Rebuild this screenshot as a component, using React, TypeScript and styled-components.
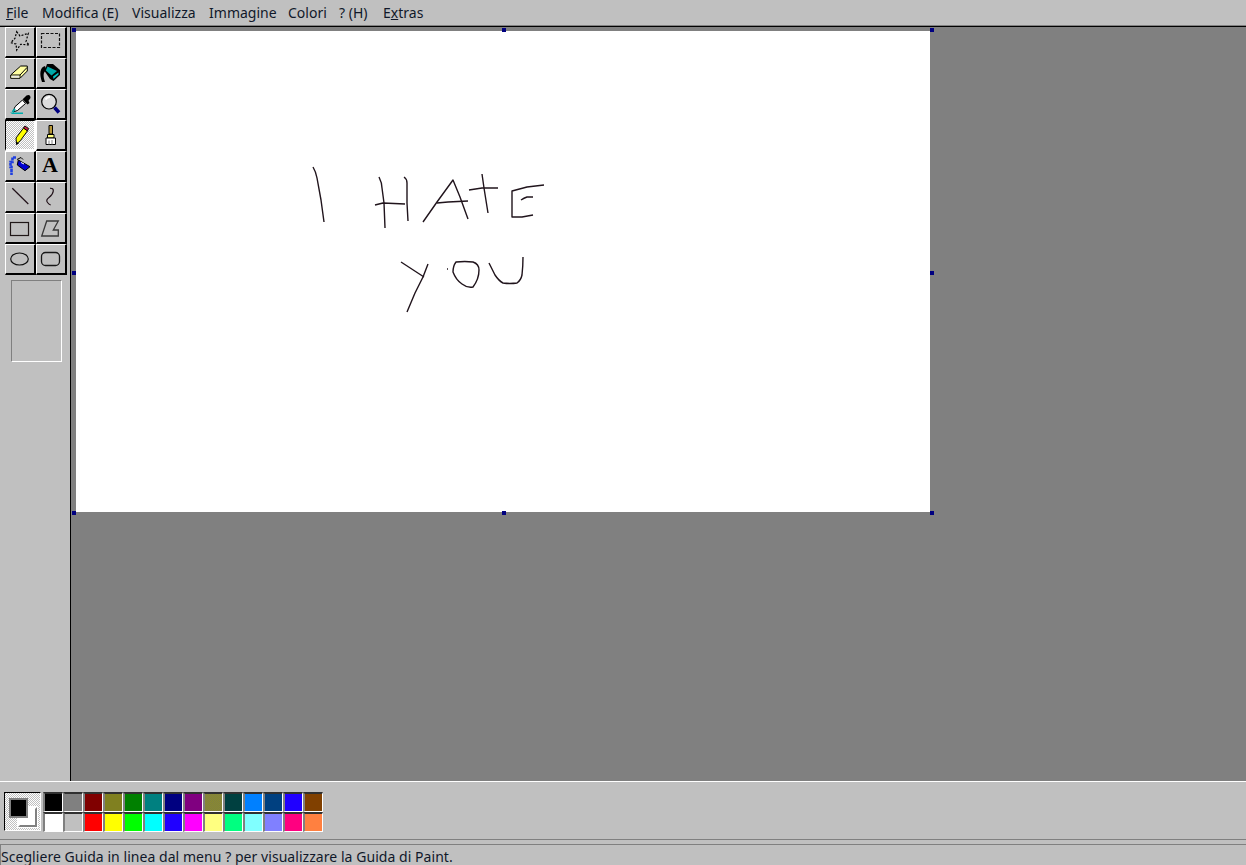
import React from "react";
import styled, { createGlobalStyle } from "styled-components";

const Global = createGlobalStyle`
  html, body, #root { margin: 0; padding: 0; height: 100%; overflow: hidden; }
  body { background: #c0c0c0; font-family: "Noto Sans", "Open Sans", sans-serif; color: #10182a; }
`;

const Frame = styled.div`
  display: flex;
  flex-direction: column;
  width: 1246px;
  height: 865px;
  background: #c0c0c0;
`;

const MenuBar = styled.div`
  display: flex;
  flex: none;
  align-items: center;
  height: 26px;
  padding: 0 0 1px 6px;
  box-sizing: border-box;
  font-size: 14px;
  border-bottom: 1px solid #808080;
`;

const MenuItem = styled.span<{ $w: number }>`
  width: ${(p) => p.$w}px;
  white-space: nowrap;
  letter-spacing: 0.02px;
`;

const Main = styled.div`
  display: flex;
  flex: none;
  height: 755px;
  box-sizing: border-box;
  border-top: 1px solid #000;
`;

const Side = styled.aside`
  width: 71px;
  flex: none;
  box-sizing: border-box;
  padding-left: 5px;
  border-right: 1px solid #000;
  background: #c0c0c0;
`;

const ToolGrid = styled.div`
  display: grid;
  grid-template-columns: 31px 31px;
  grid-auto-rows: 31px;
  width: 62px;
`;

const ToolButton = styled.div<{ $active?: boolean }>`
  box-sizing: border-box;
  border-top: 1px solid ${(p) => (p.$active ? "#000" : "#fff")};
  border-left: 1px solid ${(p) => (p.$active ? "#000" : "#fff")};
  border-right: 2px solid ${(p) => (p.$active ? "#fff" : "#000")};
  border-bottom: 2px solid ${(p) => (p.$active ? "#fff" : "#000")};
  background: ${(p) =>
    p.$active
      ? "repeating-conic-gradient(#fff 0 25%, #c0c0c0 0 50%) 0 0 / 2px 2px"
      : "#c0c0c0"};
`;

const ToolOptions = styled.div`
  width: 51px;
  height: 82px;
  box-sizing: border-box;
  margin: 5px 0 0 6px;
  border-top: 1px solid #808080;
  border-left: 1px solid #808080;
  border-right: 1px solid #fff;
  border-bottom: 1px solid #fff;
`;

const Workspace = styled.main`
  flex: 1;
  background: #808080;
  padding: 4px 0 0 5px;
`;

const Canvas = styled.div`
  position: relative;
  width: 854px;
  height: 481px;
  background: #fff;
`;

const Handle = styled.i<{ $x: string; $y: string }>`
  position: absolute;
  width: 4px;
  height: 4px;
  background: #000080;
  left: ${(p) => p.$x};
  top: ${(p) => p.$y};
`;

const Sketch = styled.svg`
  display: block;
  width: 854px;
  height: 481px;
`;

const PaletteBar = styled.div`
  display: flex;
  flex: none;
  align-items: flex-start;
  gap: 2px;
  height: 59px;
  box-sizing: border-box;
  padding: 10px 0 0 4px;
  border-top: 1px solid #fff;
  border-bottom: 1px solid #808080;
`;

const Current = styled.div`
  position: relative;
  width: 37px;
  height: 39px;
  box-sizing: border-box;
  border-top: 1px solid #000;
  border-left: 1px solid #000;
  border-right: 1px solid #fff;
  border-bottom: 1px solid #fff;
  background: repeating-conic-gradient(#fff 0 25%, #c0c0c0 0 50%) 0 0 / 2px 2px;
`;

const Chip = styled.span<{ $c: string; $front?: boolean }>`
  position: absolute;
  width: 19px;
  height: 20px;
  box-sizing: border-box;
  left: ${(p) => (p.$front ? 4 : 13)}px;
  top: ${(p) => (p.$front ? 5 : 14)}px;
  background: ${(p) => p.$c};
  border: 2px solid #808080;
  ${(p) => !p.$front && "border-top-color: #fff; border-left-color: #fff; outline: 1px solid #fff;"}
`;

const Swatches = styled.div`
  display: grid;
  grid-template-columns: repeat(14, 20px);
  grid-auto-rows: 20px;
`;

const Swatch = styled.span<{ $c: string; $dither?: boolean }>`
  box-sizing: border-box;
  background: ${(p) =>
    p.$dither
      ? `repeating-conic-gradient(${p.$c} 0 25%, #8a8a30 0 50%) 0 0 / 2px 2px`
      : p.$c};
  border-top: 2px solid #303030;
  border-left: 2px solid #808080;
  border-right: 1px solid #fff;
  border-bottom: 1px solid #fff;
`;

const Status = styled.div`
  margin-top: 4px;
  flex: 1;
  min-height: 0;
  display: flex;
  align-items: center;
  padding: 3px 0 0;
  box-sizing: border-box;
  font-size: 14px;
  letter-spacing: 0.05px;
  white-space: nowrap;
  border-top: 1px solid #808080;
  border-left: 1px solid #808080;
`;

const top = ["#000000", "#808080", "#800000", "#808020", "#008000", "#008080", "#000080", "#800080", "#808040", "#004040", "#0080ff", "#004080", "#2000ff", "#804000"];
const bottom = ["#ffffff", "#c0c0c0", "#ff0000", "#ffff00", "#00ff00", "#00ffff", "#2000ff", "#ff00ff", "#ffff80", "#00ff80", "#80ffff", "#8080ff", "#ff0080", "#ff8040"];

const handles: [string, string][] = [
  ["-4px", "-3px"], ["calc(50% - 1px)", "-3px"], ["100%", "-3px"],
  ["-4px", "calc(50% - 1px)"], ["100%", "calc(50% - 1px)"],
  ["-4px", "calc(100% - 1px)"], ["calc(50% - 1px)", "calc(100% - 1px)"], ["100%", "calc(100% - 1px)"],
];

const Ico = ({ children }: { children: React.ReactNode }) => (
  <svg width="28" height="28" viewBox="0 0 28 28" fill="none" style={{ display: "block" }}>{children}</svg>
);

const icons: React.ReactNode[] = [
  <Ico><path d="M10.7 3.7 L14 8 L22.3 5.3 L20 13.7 L23.3 17 L14.7 16.3 L10.7 22 L10 16 L4.7 14.7 L9 10.3 Z" stroke="#000" strokeWidth="1.2" strokeDasharray="2 1.5" /></Ico>,
  <Ico><rect x="4.5" y="5.5" width="18" height="14" stroke="#101010" strokeWidth="1.2" strokeDasharray="3 1.5" /></Ico>,
  <Ico><path d="M4.7 16 L14.7 7 H21.3 V12 L14 19.3 H4.7 Z" fill="#ffffa0" stroke="#000" /><path d="M5 16 H14 L21 8.5 M14 16 V19" stroke="#000" /><path d="M5.5 16.8 H13.3 V18.6 H5.5 Z" fill="#e8e8e8" /></Ico>,
  <Ico><path d="M8 7 C3 8 2 15 5 23 L8 23 C6 17 6 13 9.5 11 Z" fill="#000" /><path d="M10 5 H16 L23 11 V16 L16.5 22 L13 20 L7.5 12 Z" fill="#000" /><path d="M10.5 7.5 L20 12 L14.5 16.5 L8.8 11.5 Z" fill="#00a8a8" /><path d="M16 17.5 L21.5 13.5 V15.5 L16.5 20 Z" fill="#00c0c0" /></Ico>,
  <Ico><path d="M9 16.7 L16.5 10 L19.5 13.5 L11.5 20.5 L7 22 Z" fill="#fff" stroke="#000" /><path d="M16.7 9.3 L20.5 5.5 Q24.5 4 24.5 8 L22.5 10.8 L23.5 13 L21.5 14.5 Z" fill="#000" /><path d="M4 22.5 H17 V24 H6 Z" fill="#00b0b0" /><path d="M9 19 L6.5 22" stroke="#00a8a8" strokeWidth="2" /></Ico>,
  <Ico><circle cx="12" cy="11.7" r="7.3" fill="#dcdcdc" stroke="#000" strokeWidth="1.2" /><path d="M8.5 9.5 Q10 7 13 7" stroke="#fff" strokeWidth="2" /><path d="M17.5 17.5 L22 22.5" stroke="#000080" strokeWidth="3.6" /></Ico>,
  <Ico><path d="M10 17 L17.5 7 L21.5 9.8 L14.5 19.5 L10.5 23 Z" fill="#ffff00" stroke="#000" /><path d="M17.5 7 L19 5 L22.5 7.5 L21.5 9.8 Z" fill="#d02040" stroke="#000" /><path d="M10.2 20.5 L10 24 L13 22.5 Z" fill="#000" /></Ico>,
  <Ico><path d="M12 4.5 H15.5 V13 H12 Z" fill="#b89838" stroke="#000" /><path d="M10.5 13.5 H17 V17 H10.5 Z" fill="#ffff80" stroke="#000" /><path d="M9 17 H18.5 V23.5 H9 Z" fill="#fff" stroke="#000" /><path d="M12 19.5 V23.5 M15 19 V23.5" stroke="#808080" /></Ico>,
  <Ico><path d="M12.3 8 L24 14.7 L19 18.7 L11.3 13 Z" fill="#0000d0" stroke="#000" /><path d="M15 10.5 L18 12" stroke="#fff" /><path d="M11 7.5 L15 5.5 L17 7.5" stroke="#000" /><path d="M10 5.5 H6.5 V10 H4.5 V15 H5.5 V23" stroke="#2040e0" strokeWidth="2.6" strokeDasharray="3 0.6" /></Ico>,
  <Ico><text x="13" y="20" textAnchor="middle" fontFamily="Liberation Serif, serif" fontWeight="700" fontSize="22" fill="#000">A</text></Ico>,
  <Ico><path d="M6.3 5.3 L22.3 21" stroke="#201018" strokeWidth="1.2" /></Ico>,
  <Ico><path d="M13 5.3 Q16.5 5 16.3 8 Q15.7 12 12 14.5 Q8.5 17 10.5 19.5 Q12 21.5 13.7 22" stroke="#201018" strokeWidth="1.2" /></Ico>,
  <Ico><rect x="4.5" y="8.5" width="18" height="13" stroke="#201818" strokeWidth="1.2" /></Ico>,
  <Ico><path d="M9.7 7 H21.3 L16.3 16 H21.3 V22 H4.7 Z" stroke="#383838" strokeWidth="1.3" /></Ico>,
  <Ico><ellipse cx="13.5" cy="14" rx="8.8" ry="6" stroke="#101010" strokeWidth="1.2" /></Ico>,
  <Ico><rect x="4.5" y="7.5" width="18" height="13" rx="4" stroke="#181818" strokeWidth="1.3" /></Ico>,
];

const strokes = [
  "M313 167 Q316 172 317 178 L321 200 L324 222",
  "M379 177 Q382 183 382 188 L384 203 L385 228",
  "M375 205 L383 203 L405 204",
  "M404 177 Q407 179 407 183 L407 203 L408 221",
  "M423 222 L437 202 L453 180 L460 197 L468 219",
  "M437 203 L448 202 L468 201",
  "M482 174 L484 188 L488 213",
  "M469 190 L482 188 L498 188",
  "M544 185 L527 187 L512 191 L512 217 L522 217 L533 215",
  "M521 200 Q524 198 527 197 L533 197",
  "M401 262 L424 277",
  "M428 264 L423 277 L415 293 L407 312",
  "M447 269 L448 269",
  "M456 262 Q465 261 473 262 Q479 264 479 270 Q479 279 473 287 Q467 288 462 284 Q456 280 453 272 Q453 266 456 262 Z",
  "M489 263 Q493 271 495 275 Q499 281 503 283 Q510 284 517 283 Q521 280 522 275 Q523 266 523 257",
];

export default function App() {
  return (
    <Frame>
      <Global />
      <MenuBar>
        <MenuItem $w={36}><u>F</u>ile</MenuItem>
        <MenuItem $w={90}>Modifica (E)</MenuItem>
        <MenuItem $w={77}>Visualizza</MenuItem>
        <MenuItem $w={79}>Immagine</MenuItem>
        <MenuItem $w={51}>Colori</MenuItem>
        <MenuItem $w={44}>? (H)</MenuItem>
        <MenuItem $w={50}>E<u>x</u>tras</MenuItem>
      </MenuBar>
      <Main>
        <Side>
          <ToolGrid>
            {icons.map((icon, i) => (
              <ToolButton key={i} $active={i === 6}>{icon}</ToolButton>
            ))}
          </ToolGrid>
          <ToolOptions />
        </Side>
        <Workspace>
          <Canvas>
            <Sketch viewBox="76 31 854 481" fill="none">
              {strokes.map((d) => (
                <path key={d} d={d} stroke="#20141c" strokeWidth="1.4" strokeLinejoin="round" />
              ))}
            </Sketch>
            {handles.map(([x, y]) => (
              <Handle key={x + y} $x={x} $y={y} />
            ))}
          </Canvas>
        </Workspace>
      </Main>
      <PaletteBar>
        <Current>
          <Chip $c="#fff" />
          <Chip $c="#000" $front />
        </Current>
        <Swatches>
          {top.map((c, i) => <Swatch key={i} $c={c} $dither={i === 8} />)}
          {bottom.map((c, i) => <Swatch key={i} $c={c} />)}
        </Swatches>
      </PaletteBar>
      <Status>Scegliere Guida in linea dal menu ? per visualizzare la Guida di Paint.</Status>
    </Frame>
  );
}
